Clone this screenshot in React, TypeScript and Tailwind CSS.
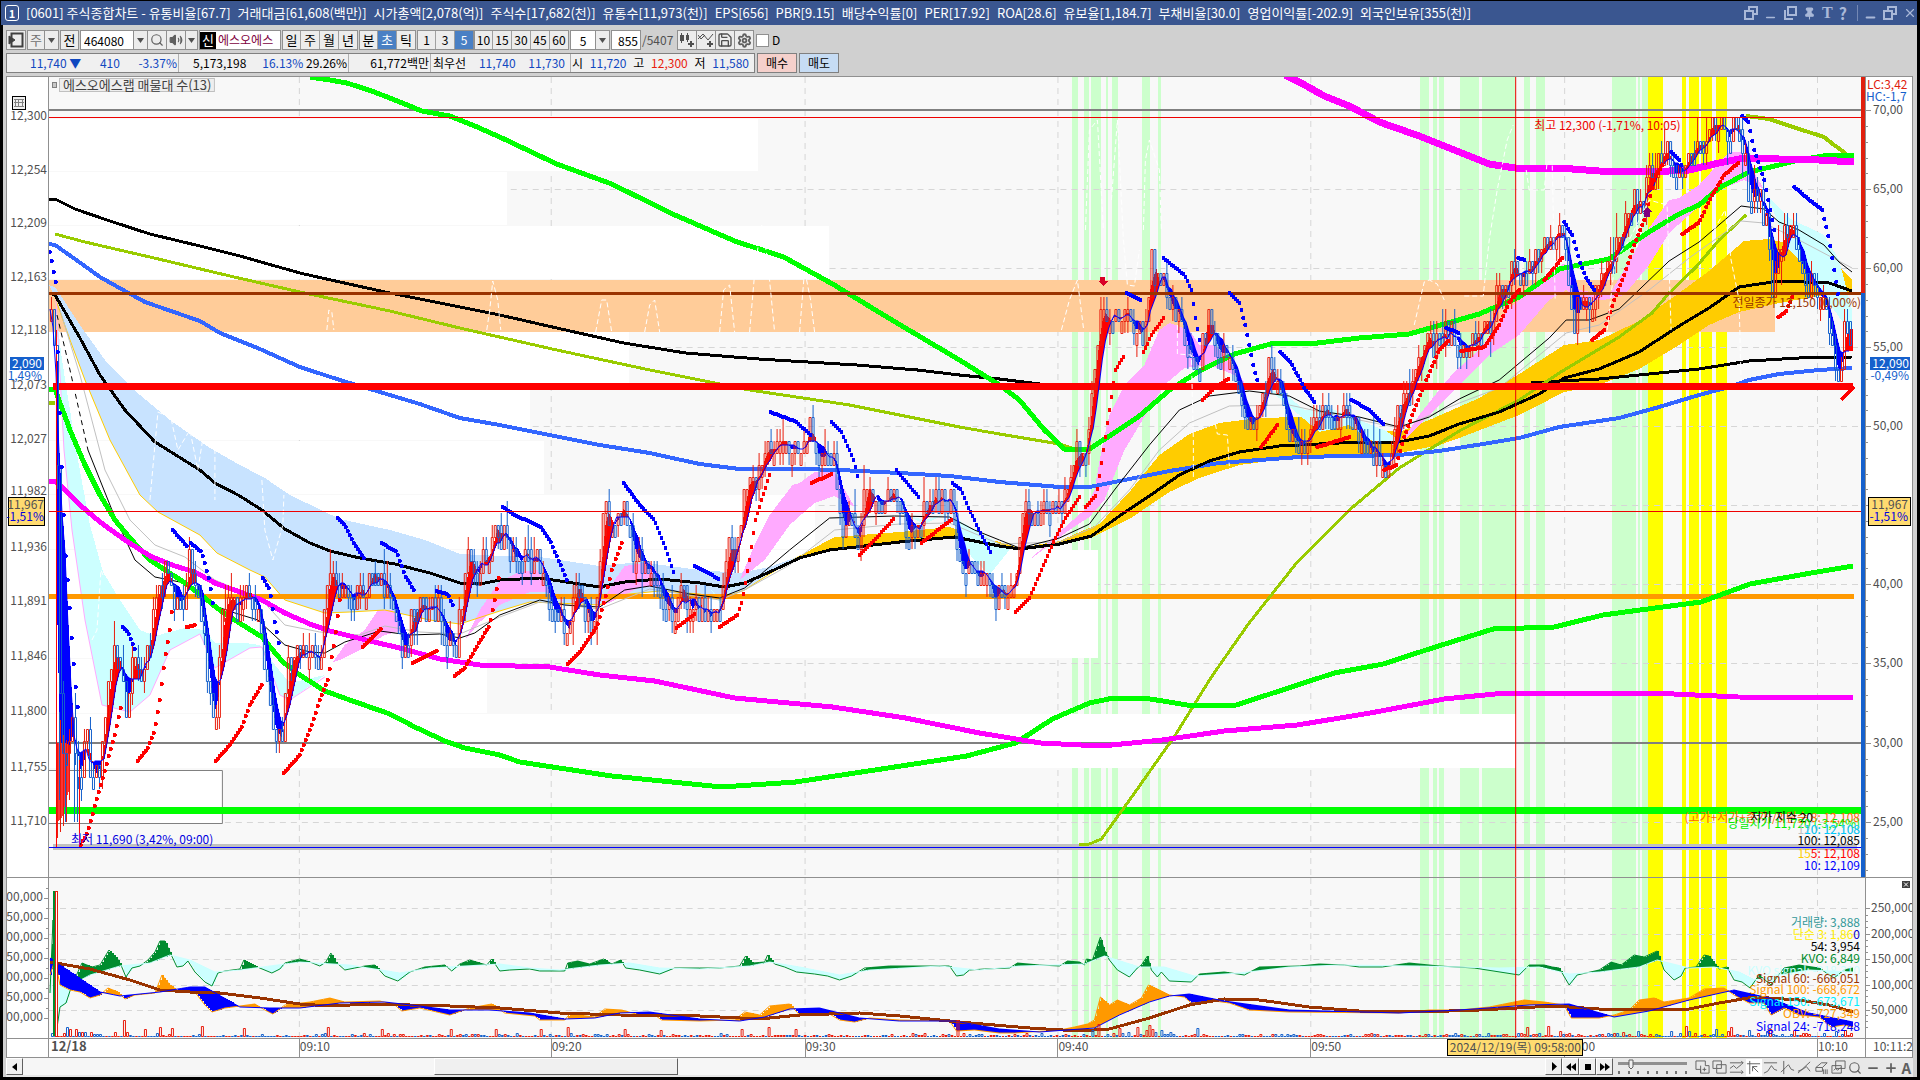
import type { ReactNode } from "react";
import {
  Search,
  Volume2,
  Save,
  Settings,
  Minus,
  Plus,
  Pin,
  X,
} from "lucide-react";

/* ---------- series data, "x,y" pairs in chart units ---------- */

const titleParts = [
  "[0601] 주식종합차트 - 유통비율[67.7]",
  "거래대금[61,608(백만)]",
  "시가총액[2,078(억)]",
  "주식수[17,682(천)]",
  "유통수[11,973(천)]",
  "EPS[656]",
  "PBR[9.15]",
  "배당수익률[0]",
  "PER[17.92]",
  "ROA[28.6]",
  "유보율[1,184.7]",
  "부채비율[30.0]",
  "영업이익률[-202.9]",
  "외국인보유[355(천)]",
];

const price =
  "49,320 54,330 57,560 60,760 65,760 70,720 78,790 84,720 90,770 100,760 106,690 112,640 118,660 125,720 130,670 140,665 150,640 158,575 165,560 172,590 180,610 188,560 196,600 204,650 214,730 220,620 228,610 240,610 248,595 258,615 264,680 272,740 280,740 288,665 300,660 310,650 318,660 330,555 340,590 352,600 362,595 376,565 385,600 395,620 403,650 412,600 425,620 435,600 445,640 455,650 465,560 475,570 485,560 493,520 500,540 510,550 535,560 545,590 558,620 565,630 575,580 585,610 593,625 600,540 607,510 615,525 623,505 630,545 640,560 655,580 672,615 683,590 690,605 705,605 717,620 725,560 737,540 745,475 755,490 765,450 772,440 782,450 792,440 802,450 812,430 820,455 832,465 842,520 852,525 857,550 865,485 875,500 895,500 905,530 915,535 925,495 940,500 952,505 960,570 985,570 992,595 1005,590 1018,560 1022,510 1040,505 1060,500 1075,450 1085,450 1092,395 1100,300 1110,330 1118,305 1128,320 1140,335 1145,330 1150,265 1162,275 1170,305 1180,320 1190,350 1197,390 1205,320 1210,310 1218,350 1230,370 1240,400 1250,430 1262,400 1270,360 1275,370 1285,420 1300,440 1310,430 1325,410 1340,410 1350,425 1365,440 1385,465 1395,430 1402,395 1415,370 1425,345 1445,330 1455,345 1470,340 1490,320 1500,285 1515,260 1522,280 1530,260 1545,240 1560,232 1565,250 1573,320 1578,290 1590,295 1605,280 1615,240 1630,210 1645,195 1655,160 1668,160 1675,190 1685,160 1700,140 1710,125 1730,125 1742,140 1750,200 1758,205 1765,210 1772,290 1780,245 1792,220 1800,280 1820,285 1830,330 1840,375 1845,310 1853,360";

const lines: { d: string; color: string; w: number; dash?: string }[] = [
  { d: "49,199 57,200 75,209 110,221 150,234 200,246 240,256 300,273 340,282 390,293 450,305 500,315 557,328 624,343 686,353 759,359 857,365 918,370 960,375 1000,379 1040,384 1080,386", color: "#000000", w: 3 },
  { d: "1532,383 1560,381 1600,379 1650,374 1700,369 1750,361 1800,358 1853,357", color: "#000000", w: 3 },
  { d: "55,234 85,242 150,257 230,276 300,292 390,311 460,328 557,350 650,370 750,390 850,405 960,427 1000,434 1060,444 1078,450", color: "#99cc00", w: 3 },
  { d: "49,403 55,403", color: "#99cc00", w: 4 },
  { d: "1747,116 1770,119 1800,129 1825,137 1835,145 1845,152 1850,157", color: "#99cc00", w: 4 },
  { d: "1080,845 1090,844 1102,839 1133,796 1176,735 1212,677 1249,624 1298,562 1350,510 1400,468 1460,431 1520,400 1560,373 1620,337 1653,313 1670,293 1697,267 1720,240 1747,215", color: "#99cc00", w: 3 },
  { d: "49,244 55,245 75,259 100,277 125,291 145,302 200,321 220,333 260,349 300,367 340,380 370,389 420,404 460,418 500,425 550,435 600,445 650,453 700,464 740,469 800,469 840,470 900,473 950,476 1000,482 1060,487 1090,487 1120,481 1170,471 1220,463 1300,457 1400,455 1440,451 1490,443 1520,438 1560,427 1620,418 1660,407 1700,395 1730,387 1750,380 1780,374 1820,370 1853,368", color: "#3366ff", w: 4 },
  { d: "60,310 80,375 105,470 130,520 155,545 185,557 215,580 262,600 285,625 320,632 360,635 385,626 420,632 460,634 500,617 540,602 600,609 650,589 720,600 745,590 790,565 835,530 900,524 950,523 1000,544 1060,542 1095,527 1130,490 1160,450 1190,423 1230,406 1290,405 1340,416 1400,428 1460,403 1500,388 1567,333 1600,325 1650,290 1690,258 1742,221 1765,223 1800,240 1853,268", color: "#c0c0c0", w: 1 },
  { d: "57,315 70,370 88,450", color: "#000000", w: 1, dash: "5 4" },
  { d: "88,450 112,510 135,560 155,577 185,583 215,606 235,613 258,620 285,645 310,652 325,653 345,642 380,631 410,635 440,634 460,638 475,633 500,615 540,600 565,605 600,607 625,590 650,586 690,594 720,598 745,588 790,550 830,518 895,516 950,517 975,530 1000,540 1020,548 1060,538 1090,524 1115,490 1150,445 1180,410 1210,396 1250,391 1290,396 1320,411 1360,417 1400,427 1430,417 1460,399 1500,380 1550,338 1567,320 1590,320 1620,309 1670,261 1700,242 1742,206 1765,209 1780,222 1800,230 1825,245 1840,262 1853,272", color: "#000000", w: 1 },
  { d: "49,293 55,295 65,312 80,338 100,375 125,410 155,442 200,470 215,483 240,496 262,510 285,529 310,543 330,551 360,558 395,564 430,573 460,583 485,583 500,580 540,578 580,584 600,587 625,582 660,579 700,583 725,587 745,583 770,572 800,558 830,550 900,542 955,537 1000,546 1020,549 1060,544 1092,536 1120,516 1150,496 1180,475 1210,461 1240,452 1280,446 1340,443 1400,442 1430,436 1460,424 1500,412 1540,394 1565,378 1600,369 1640,352 1680,326 1710,308 1740,287 1780,281 1830,283 1853,291", color: "#000000", w: 3 },
  { d: "310,77 330,80 347,83 372,91 400,102 422,111 450,116 475,126 500,137 557,164 612,184 673,214 735,241 784,257 833,284 894,321 960,360 1000,385 1020,400 1045,430 1065,449 1090,449 1110,436 1140,416 1170,390 1200,371 1235,354 1275,343 1310,344 1360,338 1410,334 1480,314 1520,297 1560,269 1610,259 1650,232 1680,214 1700,205 1720,188 1750,172 1780,165 1800,160 1830,155 1855,156", color: "#00ff00", w: 5 },
  { d: "49,389 55,389 60,403 70,430 85,465 100,495 115,520 130,538 150,560 185,583 205,598 217,608 230,617 262,637 283,662 300,675 325,691 350,700 390,714 415,727 445,741 465,748 500,755 520,762 612,776 722,787 796,782 882,769 967,756 1016,743 1053,719 1090,703 1114,698 1151,699 1194,706 1237,705 1286,689 1335,673 1384,664 1433,648 1494,629 1555,627 1604,615 1641,610 1702,602 1751,584 1812,573 1854,566", color: "#00ff00", w: 5 },
  { d: "49,481 56,482 65,490 80,505 100,522 125,540 150,556 175,566 195,572 215,583 240,592 262,600 285,613 310,624 330,631 370,641 400,648 440,659 480,665 550,667 600,675 655,681 735,698 833,707 906,718 980,733 1041,743 1102,746 1163,740 1225,731 1298,725 1371,713 1445,699 1506,693 1653,693 1739,697 1854,698", color: "#ff00ff", w: 5 },
  { d: "1286,75 1300,82 1325,96 1350,106 1380,122 1420,136 1440,144 1460,152 1490,164 1516,168 1560,168 1600,171 1650,172 1690,170 1720,163 1745,158 1780,159 1820,160 1855,162", color: "#ff00ff", w: 7 },
];

const lightBlueBand =
  "49,285 55,287 82,328 105,360 140,395 170,420 210,448 240,465 265,478 290,495 340,519 390,530 425,540 460,554 500,556 540,557 600,566 640,562 700,570 740,573 770,567 800,556 770,574 745,590 720,599 700,594 660,591 620,595 600,605 580,604 530,602 500,611 460,624 430,620 385,610 350,612 325,613 285,600 265,577 250,570 217,553 200,535 158,512 140,495 122,462 110,440 85,380 70,340 56,300";
const goldLine =
  "56,300 70,340 85,380 110,440 122,462 140,495 158,512 200,535 217,553 250,570 265,577 285,600 325,613 350,612 385,610 430,620 460,624 500,611 530,602 580,604 600,605 620,595 660,591 700,594 720,599 745,590 770,574 800,556";
const goldBand =
  "790,562 800,556 820,545 835,537 900,532 950,527 965,532 1000,542 1020,548 1060,541 1085,530 1100,524 1130,492 1160,455 1190,434 1220,423 1260,418 1300,417 1330,422 1380,430 1400,432 1430,420 1480,398 1520,374 1565,345 1600,340 1640,321 1680,293 1710,271 1745,241 1770,239 1800,246 1830,258 1853,279 1853,291 1820,296 1780,303 1740,312 1710,325 1680,345 1640,369 1600,385 1565,392 1520,415 1460,438 1440,445 1400,453 1350,455 1300,457 1240,465 1200,478 1170,492 1130,519 1092,538 1060,545 1020,549 1000,546 955,538 900,543 830,551";

const pinkAreas = [
  "333,662 345,645 365,630 378,610 393,610 405,630 385,635 360,650 340,660",
  "465,640 480,610 500,581 520,572 538,570 545,585 565,602 545,592 530,592 500,605 480,622",
  "600,607 615,580 625,566 650,562 660,575 665,587 640,587 620,598",
  "740,580 755,545 770,515 793,485 800,483 815,472 835,472 855,507 835,496 815,503 790,525 765,560",
  "1030,560 1060,532 1085,510 1095,490 1103,445 1110,415 1125,385 1145,365 1160,330 1170,323 1190,330 1200,345 1215,345 1230,360 1250,390 1235,375 1210,365 1185,368 1165,385 1145,417 1125,450 1105,500 1090,517 1070,530",
  "1400,445 1420,415 1440,390 1455,372 1480,350 1510,308 1540,285 1565,263 1580,290 1610,295 1625,270 1645,235 1670,200 1680,198 1700,185 1730,152 1742,152 1765,189 1745,180 1720,190 1690,215 1670,233 1650,265 1625,295 1605,300 1580,300 1567,290 1550,300 1520,335 1490,355 1460,385 1430,415",
];
const cyanAreas = [
  "56,310 62,360 78,460 90,525 103,572 120,600 140,630 155,636 185,628 205,630 215,643 245,643 260,645 275,665 290,683 325,675 290,700 280,695 262,647 250,648 215,668 200,634 170,650 150,695 130,712 102,705 85,620 72,530 64,450",
  "905,515 925,520 945,514 925,524",
  "955,518 985,535 1010,550 990,575 975,560 962,545",
  "1270,390 1285,393 1305,410 1330,408 1385,430 1400,440 1395,445 1370,440 1350,425 1320,432 1300,415",
  "1768,195 1790,218 1825,235 1840,260 1853,310 1853,335 1835,310 1810,270 1790,250",
  "710,588 722,600 735,585 722,606",
];

const sarBlue = [
  "50,252 52,261 54,272 56,282 58,352 60,413 62,467 64,515 66,556 69,592 71,624 73,652 75,676 77,698 79,716",
  "123,627 128,632 136,651",
  "173,530 187,546",
  "191,543 202,552 210,582 214,610",
  "263,578 270,590 275,622 280,648",
  "338,518 345,525 355,545 364,558",
  "382,543 397,552 405,575 414,590",
  "437,591 448,594 453,605",
  "503,507 515,515 540,526 550,540 560,563 567,580",
  "624,483 640,505 655,520 665,545 675,575",
  "695,566 710,573 720,580",
  "771,412 797,422 812,436",
  "832,422 842,432 850,450 855,463 859,480",
  "897,470 905,480 920,498",
  "953,483 962,490 970,510 982,535 991,552",
  "1127,293 1142,300",
  "1164,258 1175,267 1185,275 1192,290 1196,318 1200,340",
  "1230,293 1240,303 1246,325 1250,345 1255,370 1258,380",
  "1281,352 1292,363 1305,388 1316,403",
  "1352,400 1370,410 1384,424",
  "1447,328 1460,333",
  "1519,258 1525,260",
  "1565,222 1573,235 1580,260 1588,280 1595,290",
  "1672,152 1680,160 1683,167",
  "1743,116 1749,122 1755,150 1765,180 1770,205 1776,235",
  "1795,187 1810,200 1823,210 1830,240 1835,270 1840,300",
];
const sarRed = [
  "81,845 88,832 98,795 108,760 115,735 121,708",
  "138,761 148,748 155,730 160,700 165,660 170,630 172,612",
  "187,627 195,625",
  "216,761 230,745 243,725 250,705 262,685",
  "284,773 300,755 312,725 320,700 328,680 335,640 340,600",
  "363,647 382,628",
  "413,663 437,651",
  "455,676 465,668 478,645 490,625 495,600 500,572",
  "568,664 580,652 597,627 605,600 612,570 622,543",
  "677,628 695,614",
  "720,627 738,615 743,600 750,560 756,520 762,500 770,475",
  "812,483 832,474",
  "860,555 875,540 895,518",
  "922,543 945,525 952,520",
  "1016,612 1030,598 1048,556 1055,540 1066,518 1080,497",
  "1086,507 1097,495 1104,450 1110,410 1116,370 1125,355",
  "1144,352 1152,335 1164,318",
  "1203,400 1215,388 1230,378",
  "1262,447 1278,425",
  "1318,447 1350,437",
  "1385,470 1397,465 1404,440 1415,410 1425,385 1440,350 1450,340",
  "1462,351 1485,347 1500,325 1510,302 1520,290",
  "1545,280 1563,258",
  "1593,340 1605,330 1615,300 1625,275 1635,245 1645,220 1655,180 1663,165",
  "1683,234 1700,222 1712,197 1725,175 1740,162",
  "1779,317 1787,311 1793,297",
];

const whiteDashes = [
  "150,500 158,412 171,418 178,450 190,430 198,470 205,425 215,440 215,500",
  "262,480 265,530 273,560 283,525 284,495",
  "92,640 97,630 101,570 103,575",
  "327,330 329,310 332,312 334,330",
  "487,330 490,310 493,281 498,300 501,330",
  "596,332 602,300 607,300 612,332",
  "645,332 650,305 655,300 660,332",
  "720,332 724,290 730,285 735,332",
  "750,332 756,262 762,225 768,260 775,332",
  "800,332 805,270 811,300 815,332",
  "1062,330 1070,300 1078,280 1084,328",
  "1086,230 1090,130 1098,120 1104,230",
  "1112,200 1118,120 1124,240 1128,285 1135,286 1140,250",
  "1144,230 1146,160 1150,140 1160,170 1162,230",
  "1178,325 1178,354 1192,355 1194,440 1194,478",
  "1216,424 1218,434 1228,435 1230,466",
  "1415,325 1425,282 1430,280 1438,284 1445,300",
  "1465,296 1484,296 1490,240 1498,190 1508,140 1514,125",
  "1527,170 1530,190 1545,190 1548,162 1553,162 1556,300",
  "1608,330 1616,260 1630,240 1650,200 1668,205 1672,330",
  "1715,230 1726,210 1732,260 1740,300 1742,380",
];

const kvo =
  "50,993 53,920 56,1035 60,1007 66,1003 72,985 82,963 92,967 100,965 109,950 117,958 121,965 126,977 132,968 140,966 148,960 155,952 160,941 165,941 170,952 177,967 183,966 188,961 195,972 205,982 212,986 218,973 225,971 240,969 244,960 255,966 272,973 280,969 285,963 300,959 310,962 320,966 326,962 331,953 336,962 345,970 355,968 365,966 375,965 385,976 398,981 410,972 425,967 445,965 452,971 460,964 470,960 480,963 487,965 492,959 500,971 510,970 530,969 540,971 565,971 568,963 578,961 590,964 604,959 612,964 621,960 626,968 640,970 660,974 675,968 700,968 720,968 740,966 746,956 753,963 765,962 768,955 775,964 785,967 797,972 815,974 828,976 840,980 852,976 865,968 890,966 950,966 957,976 964,975 970,970 985,969 1010,968 1018,963 1040,965 1060,966 1068,961 1080,962 1085,965 1087,959 1093,960 1101,937 1105,950 1110,960 1118,970 1130,977 1138,968 1142,965 1148,956 1152,970 1158,977 1162,972 1170,981 1192,982 1200,974 1225,972 1245,975 1260,967 1300,966 1320,964 1345,965 1360,967 1383,967 1410,963 1440,966 1475,968 1520,975 1530,965 1545,965 1553,967 1560,968 1570,985 1578,975 1600,970 1612,962 1622,965 1635,955 1645,957 1658,951 1665,970 1675,980 1682,976 1686,968 1697,967 1705,955 1710,956 1720,969 1728,967 1735,980 1743,982 1751,988 1760,975 1772,985 1785,968 1800,965 1820,968 1835,978 1845,970 1854,968";
const kvoSignal =
  "50,960 60,985 75,983 90,975 120,966 150,963 170,955 190,960 215,972 240,970 300,962 350,965 400,973 430,968 500,964 530,968 560,970 600,965 630,963 660,968 700,969 750,966 770,962 800,967 840,975 870,970 940,966 980,970 1020,966 1085,964 1105,956 1140,967 1165,967 1195,976 1240,973 1290,967 1340,965 1420,966 1500,968 1540,967 1570,974 1600,972 1640,967 1658,960 1690,968 1715,967 1740,972 1755,980 1780,975 1810,970 1854,972";
const obv =
  "50,975 55,960 60,985 70,990 80,992 90,998 100,995 108,988 118,992 125,999 135,995 155,993 162,975 170,985 180,992 195,992 205,1005 212,1012 225,1008 240,1006 255,1004 265,1010 273,1014 285,1005 310,1002 330,998 345,1002 380,1001 395,1005 402,1011 420,1008 450,1015 470,1008 492,1004 505,1013 535,1016 540,1020 565,1020 570,1014 595,1017 605,1009 622,1010 640,1015 655,1015 662,1020 700,1021 735,1020 745,1012 760,1015 770,1006 790,1004 800,1015 830,1014 840,1020 855,1022 870,1018 900,1020 950,1021 957,1031 975,1030 1000,1033 1015,1033 1060,1030 1075,1027 1088,1024 1095,1020 1101,997 1110,1005 1118,1000 1130,1005 1142,998 1149,985 1160,990 1170,995 1185,997 1192,1003 1215,1001 1230,1003 1250,1010 1290,1012 1400,1013 1430,1010 1460,1010 1490,1007 1525,1000 1545,1002 1565,1005 1572,1018 1600,1018 1615,1015 1630,1010 1640,1000 1655,998 1665,1002 1690,998 1705,989 1725,988 1735,995 1750,1003 1765,1003 1772,1015 1785,1008 1800,1015 1820,1017 1832,1027 1845,1025 1854,1027";
const signal24 =
  "50,958 60,965 100,992 120,996 160,992 190,987 205,987 240,1007 270,1008 300,1008 340,1003 385,1002 420,1006 450,1010 490,1010 530,1013 565,1019 595,1018 620,1013 650,1012 700,1019 740,1021 765,1017 790,1009 820,1008 860,1018 900,1021 955,1021 1000,1029 1040,1032 1095,1028 1120,1015 1150,1002 1170,996 1190,994 1225,1001 1290,1010 1400,1013 1460,1010 1530,1005 1570,1004 1615,1017 1650,1011 1690,1000 1735,990 1770,998 1810,1013 1854,1022";
const signal60 =
  "50,962 90,969 130,980 160,990 190,992 220,993 260,998 300,1004 330,1006 370,1004 450,1006 500,1008 560,1013 620,1015 700,1016 760,1019 800,1015 860,1013 900,1016 960,1022 1030,1028 1080,1031 1110,1029 1150,1018 1190,1005 1225,999 1260,1000 1310,1007 1360,1011 1420,1012 1480,1010 1555,1006 1600,1009 1690,1009 1720,1003 1755,997 1800,1000 1830,1005 1854,1012";

// right edge, top and bottom of each volume-at-price bar
const profile = [
  [758, 119, 171],
  [507, 172, 225],
  [829, 226, 279],
  [629, 332, 386],
  [530, 386, 440],
  [544, 441, 494],
  [815, 495, 549],
  [1099, 550, 604],
  [1099, 604, 658],
  [487, 659, 713],
  [1517, 714, 768],
];
const greenBands = [
  [1073, 6], [1085, 5], [1092, 10], [1107, 2], [1113, 6], [1143, 8], [1159, 3],
  [1421, 9], [1434, 4], [1440, 5], [1461, 19], [1483, 34], [1525, 6], [1537, 9],
  [1613, 24], [1639, 2], [1643, 6],
];
const yellowBands = [[1649, 15], [1683, 4], [1690, 10], [1702, 11], [1717, 11]];
const gridX = [299, 551, 805, 1058, 1311, 1565, 1818];
const volumeSpikes: Record<number, number> = {
  124: 16, 160: 9, 172: 8, 202: 10, 243: 8, 328: 9, 381: 7, 451: 7, 497: 7, 540: 7, 567: 9,
  624: 7, 660: 6, 741: 7, 768: 9, 795: 7, 957: 16, 1098: 12, 1137: 9, 1151: 11, 1527: 9, 1548: 10,
  1686: 10, 1733: 9, 1770: 7,
};

/* ---------- helpers ---------- */

type Pt = [number, number];

const parse = (s: string): Pt[] =>
  s.split(" ").map((p) => p.split(",").map(Number) as Pt);

function at(pts: Pt[], x: number) {
  if (x <= pts[0][0]) return pts[0][1];
  for (let i = 1; i < pts.length; i++) {
    if (x <= pts[i][0]) {
      const [x0, y0] = pts[i - 1];
      const [x1, y1] = pts[i];
      return y0 + ((y1 - y0) * (x - x0)) / (x1 - x0);
    }
  }
  return pts[pts.length - 1][1];
}

const rnd = (n: number) => {
  const v = Math.sin(n * 12.9898) * 43758.5453;
  return v - Math.floor(v);
};

// splits the area between two series into the parts where a is over or under b
function between(a: Pt[], b: Pt[], step = 2) {
  let over = "";
  let under = "";
  for (let x = 50; x < 1854; x += step) {
    const ya = Math.round(at(a, x));
    const yb = Math.round(at(b, x));
    if (ya === yb) continue;
    const cell = `M${x} ${ya}h${step}V${yb}h${-step}z`;
    if (ya < yb) over += cell;
    else under += cell;
  }
  return { over, under };
}

// one round dot per bar
function dots(series: string[]) {
  let d = "";
  for (const s of series) {
    const pts = parse(s);
    for (let x = pts[0][0]; x <= pts[pts.length - 1][0]; x += 2) {
      d += `M${x} ${Math.round(at(pts, x))}h0`;
    }
  }
  return d;
}

const TICK = 12;

function buildCandles() {
  const pts = parse(price);
  let up = "";
  let down = "";
  const closes: Pt[] = [];
  let prev = 320;
  let i = 0;
  for (let x = 50; x < 1853; x += 3, i++) {
    const raw = at(pts, x) + (rnd(i) - 0.5) * 30;
    const close = Math.max(117, 117 + Math.round((raw - 117) / TICK) * TICK);
    const top = Math.min(prev, close);
    const bottom = Math.max(prev, close, top + TICK);
    const high = Math.max(117, top - (rnd(i + 500) > 0.6 ? TICK : 0) - (rnd(i + 650) > 0.85 ? TICK : 0));
    const low = bottom + (rnd(i + 900) > 0.65 ? TICK : 0) + (rnd(i + 990) > 0.92 ? TICK : 0);
    const d = `M${x}.5 ${top}.5h2V${bottom}.5h-2zM${x + 1}.5 ${high}V${top}M${x + 1}.5 ${bottom}V${low}`;
    const rising = close === prev ? rnd(i + 77) > 0.5 : close < prev;
    if (rising) up += d;
    else down += d;
    closes.push([x, close]);
    prev = close;
  }
  const average = (n: number): Pt[] =>
    closes.map(([x], k) => {
      const part = closes.slice(Math.max(0, k - n + 1), k + 1);
      return [x, part.reduce((t, c) => t + c[1], 0) / part.length] as Pt;
    });
  return { up, down, fast: average(3), slow: average(6) };
}

function buildVolume() {
  let up = "";
  let down = "";
  let i = 0;
  for (let x = 51; x < 1853; x += 3, i++) {
    const busy = x < 220 ? 5 : x > 1500 ? 4 : x > 1090 && x < 1200 ? 5 : 2;
    const spike = volumeSpikes[x] ?? volumeSpikes[x + 1] ?? volumeSpikes[x + 2] ?? 0;
    const h = Math.max(spike, Math.floor(rnd(i + 31) * rnd(i + 5) * busy * 2));
    const d = `M${x}.5 1036.5v${-h}h2v${h}z`;
    if (rnd(i + 210) > 0.5 || spike) up += d;
    else down += d;
  }
  return { up, down };
}

const candles = buildCandles();
const maBand = between(candles.fast, candles.slow, 1);
const volume = buildVolume();
const kvoBand = between(parse(kvo), parse(kvoSignal));
const obvBand = between(parse(obv), parse(signal24));
const blueDots = dots(sarBlue);
const redDots = dots(sarRed);
const points = (pts: Pt[]) => pts.map((p) => p.join(",")).join(" ");

const uiFont = "font-['Noto_Sans_CJK_KR',sans-serif] text-[12px]";

/* ---------- chart panels ---------- */

function Bands({ y, h }: { y: number; h: number }) {
  return (
    <>
      {greenBands.map(([x, w]) => (
        <rect key={x} x={x} y={y} width={w} height={h} fill="#ccffcc" />
      ))}
      {yellowBands.map(([x, w]) => (
        <rect key={x} x={x} y={y} width={w} height={h} fill="#ffff00" />
      ))}
    </>
  );
}

function Label({ x = 1861, y, fill, end = true, children }: { x?: number; y: number; fill: string; end?: boolean; children: ReactNode }) {
  return (
    <text x={x} y={y} fill={fill} textAnchor={end ? "end" : "start"}>
      {children}
    </text>
  );
}

function PricePanel() {
  return (
    <svg viewBox="49 77 1817 800" preserveAspectRatio="none" className={`block h-full w-full bg-[#f8f8f8] ${uiFont}`}>
      <g shapeRendering="crispEdges" fill="none">
        <Bands y={77} h={800} />
        <g stroke="#d6d6d6" strokeDasharray="6 5">
          {gridX.map((x) => (
            <path key={x} d={`M${x}.5 77V877`} />
          ))}
          {[189, 268, 347, 426, 505, 584, 663, 822].map((y) => (
            <path key={y} d={`M49 ${y}.5H1862`} />
          ))}
        </g>
        {profile.map(([x, y0, y1]) => (
          <rect key={y0} x={49} y={y0} width={x - 49} height={y1 - y0} fill="#ffffff" />
        ))}
        <rect x={49} y={280} width={1727} height={52} fill="#ffcc99" />
        <path d="M49 770.5H222.5V823.5H49" fill="#ffffff" stroke="#808080" />

        <polygon points={lightBlueBand} fill="#c8e3ff" />
        <polygon points={goldBand} fill="#ffcc00" />
        {cyanAreas.map((p) => (
          <polygon key={p} points={p} fill="#ccffff" />
        ))}
        {pinkAreas.map((p) => (
          <polygon key={p} points={p} fill="#ffaaff" />
        ))}
        <polyline points={goldLine} stroke="#ffcc00" />
        <polyline points="56,300 64,450 72,530 85,620 102,705 130,712 150,695 170,650 200,634 215,668 250,648 262,647 280,695 290,700 325,677" stroke="#ffaaff" />

        <path d="M49 110H1862" stroke="#808080" strokeWidth={2} />
        <path d="M49 743H1862" stroke="#808080" strokeWidth={2} />
        <path d="M49 596.5H1855" stroke="#ff9900" strokeWidth={5} />
        <path d="M49 810.5H1862" stroke="#00ff00" strokeWidth={7} />
        <path d="M53 847H1858" stroke="#c0c0c0" strokeWidth={6} />
        <path d="M49 847.5H1862" stroke="#0000ff" />

        {lines.map((l) => (
          <polyline key={l.d} points={l.d} stroke={l.color} strokeWidth={l.w} strokeDasharray={l.dash} strokeLinejoin="round" />
        ))}
        <path d="M53 386.5H1854" stroke="#ff0000" strokeWidth={7} />
        <path d="M1842 400L1855 387" stroke="#ff0000" strokeWidth={4} />

        {/* opening gap */}
        <path d="M57 330L59 450L63 600L70 743H60L57 600z" fill="#0000ff" />
        <path d="M57 743H70V788L66 800L62 818L58 822z" fill="#ff3333" />
        <path d="M57.5 743V838M60.5 720V832M63.5 735V826M66.5 740V822M69.5 720V800" stroke="#e81c0c" />
        <path d="M59.5 712V800M65.5 758V822M74.5 740V822M77.5 750V822" stroke="#1560cc" />

        <path d={maBand.over} fill="#ff0000" />
        <path d={maBand.under} fill="#0000ff" />
        <path d={candles.up} stroke="#e81c0c" />
        <path d={candles.down} stroke="#1560cc" />
        <polyline points={points(candles.slow)} stroke="#0000ff" />
        <path d="M56.5 330V847M79.5 760V847" stroke="#ff0000" />

        <path d="M49 293.5H1862" stroke="#993300" strokeWidth={3} />
        <path d={blueDots} stroke="#0000ff" strokeWidth={4} strokeLinecap="round" />
        <path d={redDots} stroke="#ff0000" strokeWidth={4} strokeLinecap="round" />
        <g stroke="#ffffff" strokeDasharray="5 3">
          {whiteDashes.map((p) => (
            <polyline key={p} points={p} />
          ))}
        </g>
        <path d="M49 117.5H1862M49 511.5H1862M1516.5 77V877" stroke="#ee0000" />
        <path d="M1101 277h5v4h3l-5 5l-5-5h2z" fill="#d90026" />
        <path d="M1648 207l5 5h-2v5h-6v-5h-2z" fill="#800080" />
        <rect x={1862} y={77} width={4} height={216} fill="#e0200e" />
        <rect x={1862} y={293} width={4} height={584} fill="#1560cc" />
        <rect x={52.5} y={82.5} width={4} height={5} fill="#c8c8c8" stroke="#808080" />
        <rect x={59.5} y={78.5} width={155} height={13} fill="#eeeeee" stroke="#c0c0c0" />
      </g>
      <g className="text-[13px]">
        <Label x={63} y={90} fill="#404040" end={false}>에스오에스랩 매물대 수(13)</Label>
      </g>
      <Label x={1535} y={130} fill="#ee0000" end={false}>최고 12,300 (-1,71%, 10:05)</Label>
      <Label x={71} y={844} fill="#0000dd" end={false}>최저 11,690 (3,42%, 09:00)</Label>
      <Label x={1862} y={307} fill="#993300">전일종가 12,150 (0,00%)</Label>
      <Label y={822} fill="#ff6600">(고가+저가+종가)/3 단순 8: 12,108</Label>
      <Label x={1814} y={822} fill="#000000">저가 지수 20</Label>
      <Label y={828} fill="#00ee00">당일시가 11,720 (-3,54%)</Label>
      <Label y={834} fill="#c0c0c0">120: 12,108</Label>
      <Label y={834} fill="#00ccff">10: 12,108</Label>
      <Label y={845} fill="#000000">100: 12,085</Label>
      <Label x={1812} y={858} fill="#ffcc00">15</Label>
      <Label y={858} fill="#ff0000">5: 12,108</Label>
      <Label y={870} fill="#0000ff">10: 12,109</Label>
    </svg>
  );
}

function IndicatorPanel() {
  return (
    <svg viewBox="49 878 1817 160" preserveAspectRatio="none" className={`block h-full w-full bg-[#f8f8f8] ${uiFont}`}>
      <g shapeRendering="crispEdges" fill="none">
        <Bands y={878} h={160} />
        <g stroke="#d6d6d6" strokeDasharray="6 5">
          {gridX.map((x) => (
            <path key={x} d={`M${x}.5 878V1038`} />
          ))}
          {[908, 934, 959, 985, 1010].map((y) => (
            <path key={y} d={`M49 ${y}.5H1862`} />
          ))}
        </g>
        <path d={kvoBand.over} fill="#008c2e" />
        <path d={kvoBand.under} fill="#ccffff" />
        <polyline points={kvo} stroke="#008c2e" />
        <polyline points={kvoSignal} stroke="#ccffff" />
        <path d={obvBand.over} fill="#ff9900" />
        <path d={obvBand.under} fill="#0000ff" />
        <polyline points={obv} stroke="#ff9900" />
        <polyline points={signal60} stroke="#993300" strokeWidth={3} />
        <polyline points={signal24} stroke="#0000ff" />
        <path d={volume.down} stroke="#1560cc" />
        <path d={volume.up} stroke="#e81c0c" />
        <rect x={53} y={891} width={2} height={145} fill="#008c2e" />
        <rect x={55.5} y={891.5} width={2} height={145} fill="#ffffff" stroke="#e81c0c" />
        <path d="M1516.5 878V1038" stroke="#ee0000" />
      </g>
      <Label y={927} fill="#339999">거래량: 3,888</Label>
      <Label y={939} fill="#ffee00">단순 3: 1,860</Label>
      <Label y={939} fill="#0000ff">0</Label>
      <Label y={951} fill="#000000">54: 3,954</Label>
      <Label y={963} fill="#008c2e">KVO: 6,849</Label>
      <Label y={975} fill="#ccffff">KVO signal: -218,310</Label>
      <Label y={983} fill="#993300">Signal 60: -666,051</Label>
      <Label y={994} fill="#ff9900">Signal 100: -668,672</Label>
      <Label y={1006} fill="#00eeff">Signal 150: -673,671</Label>
      <Label y={1018} fill="#ff9900">OBV: -727,349</Label>
      <Label y={1031} fill="#0000ff">Signal 24: -718,248</Label>
    </svg>
  );
}

const leftPrices: [string, number][] = [
  ["12,300", 116], ["12,254", 170], ["12,209", 223], ["12,163", 277], ["12,118", 330],
  ["12,073", 385], ["12,027", 439], ["11,982", 491], ["11,936", 547], ["11,891", 601],
  ["11,846", 656], ["11,800", 711], ["11,755", 767], ["11,710", 821],
];
const rightScale: [string, number][] = [
  ["70,00", 110], ["65,00", 189], ["60,00", 268], ["55,00", 347], ["50,00", 426],
  ["45,00", 505], ["40,00", 584], ["35,00", 663], ["30,00", 743], ["25,00", 822],
];

function LeftAxis() {
  return (
    <div className="flex w-[42px] shrink-0 flex-col border-r border-[#909090] bg-white">
      <div className="min-h-0 flex-[800]">
        <svg viewBox="7 77 41 800" preserveAspectRatio="none" className={`block h-full w-full ${uiFont}`}>
          <g transform="translate(12 96)">
            <rect x={0} y={0} width={14} height={14} fill="#000" />
            <rect x={1} y={1} width={12} height={12} fill="#f0f0f0" />
            <path d="M2 3.500H12M2 6.500H12M2 10.500H12M3.500 3V11M6.500 3V11M10.500 3V11" stroke="#808080" />
          </g>
          {leftPrices.map(([t, y]) => (
            <Label key={t} x={47} y={y + 4} fill="#505050">{t}</Label>
          ))}
          <rect x={10} y={357} width={34} height={13} fill="#1560cc" />
          <Label x={42} y={368} fill="#ffffff">2,090</Label>
          <rect x={10} y={370} width={34} height={10} fill="#ffffff" />
          <Label x={42} y={380} fill="#1560cc">1,49%</Label>
          <rect x={8.500} y={497.500} width={36} height={28} fill="#ffdb70" stroke="#000" />
          <Label x={44} y={509} fill="#505050">11,967</Label>
          <Label x={44} y={521} fill="#0000dd">-1,51%</Label>
        </svg>
      </div>
      <div className="min-h-0 flex-[160] border-t border-[#909090]">
        <svg viewBox="7 878 41 160" preserveAspectRatio="none" className={`block h-full w-full ${uiFont}`}>
          {["00,000", "50,000", "00,000", "50,000", "00,000", "50,000", "00,000"].map((t, i) => (
            <g key={i}>
              <Label x={43} y={901 + i * 20} fill="#505050">{t}</Label>
              <path d={`M44 ${898 + i * 20}.5H48M46 ${888 + i * 20}.5H48`} stroke="#909090" />
            </g>
          ))}
        </svg>
      </div>
    </div>
  );
}

function RightAxis() {
  return (
    <div className="flex w-[47px] shrink-0 flex-col border-l border-[#909090] bg-white">
      <div className="min-h-0 flex-[800]">
        <svg viewBox="1867 77 46 800" preserveAspectRatio="none" className={`block h-full w-full ${uiFont}`}>
          <Label x={1868} y={89} fill="#e0200e" end={false}>LC:3,42</Label>
          <Label x={1867} y={101} fill="#1560cc" end={false}>HC:-1,7</Label>
          {rightScale.map(([t, y]) => (
            <g key={t}>
              <Label x={1874} y={y + 4} fill="#505050" end={false}>{t}</Label>
              <path
                d={`M1867 ${y}.5h5M1867 ${y + 16}.5h2M1867 ${y + 32}.5h2M1867 ${y + 48}.5h2M1867 ${y + 63}.5h2`}
                stroke="#909090"
              />
            </g>
          ))}
          <rect x={1871} y={357} width={40} height={13} fill="#1560cc" />
          <Label x={1910} y={368} fill="#ffffff">12,090</Label>
          <Label x={1910} y={380} fill="#1560cc">-0,49%</Label>
          <rect x={1869.500} y={497.500} width={42} height={28} fill="#ffdb70" stroke="#000" />
          <Label x={1909} y={509} fill="#505050">11,967</Label>
          <Label x={1909} y={521} fill="#0000dd">-1,51%</Label>
        </svg>
      </div>
      <div className="min-h-0 flex-[160] border-t border-[#909090]">
        <svg viewBox="1867 878 46 160" preserveAspectRatio="none" className={`block h-full w-full ${uiFont}`}>
          <rect x={1903} y={881} width={8} height={7} fill="#404040" />
          <path d="M1905 882.500l4 4M1909 882.500l-4 4" stroke="#fff" />
          {["250,000", "200,000", "150,000", "100,000", "50,000"].map((t, i) => (
            <g key={t}>
              <Label x={1872} y={912 + Math.round(i * 25.500)} fill="#505050" end={false}>{t}</Label>
              <path
                d={`M1867 ${908 + Math.round(i * 25.500)}.5h4M1867 ${915 + i * 25}.5h2M1867 ${921 + i * 25}.5h2M1867 ${927 + i * 25}.5h2`}
                stroke="#909090"
              />
            </g>
          ))}
        </svg>
      </div>
    </div>
  );
}

/* ---------- window chrome ---------- */

function Windows({ flip = false }: { flip?: boolean }) {
  return (
    <svg width="14" height="14" viewBox="0 0 14 14" fill="none" stroke="currentColor" strokeWidth="2" className={flip ? "-scale-x-100" : ""}>
      <path d="M5 5V1h8v7H9M1 5h8v8H1z" />
    </svg>
  );
}

function TitleBar() {
  return (
    <header className="flex h-[24px] shrink-0 items-center justify-between bg-[#3a5690] pl-1 text-white">
      <h1 className="flex items-center gap-[7px] text-[13px] leading-[18px] whitespace-nowrap">
        <span className="flex h-[16px] w-[14px] items-center justify-center rounded-[3px] border border-white text-[11px] font-bold">1</span>
        {titleParts.map((t) => (
          <span key={t}>{t}</span>
        ))}
      </h1>
      <div className="flex items-center gap-[6px] text-[#a9b8d8]">
        <button aria-label="창 분리"><Windows /></button>
        <button aria-label="접기"><Minus size={13} strokeWidth={3} className="mt-2" /></button>
        <button aria-label="창 복제">
          <svg width="14" height="14" viewBox="0 0 14 14" fill="none" stroke="currentColor" strokeWidth="2">
            <path d="M5 1h8v8H5zM2 4v9h8" />
          </svg>
        </button>
        <button aria-label="고정"><Pin size={13} fill="currentColor" /></button>
        <button className="font-['Liberation_Serif',serif] text-base leading-4 font-bold">T</button>
        <button className="text-base leading-4 font-bold">?</button>
        <span className="ml-1 h-[16px] w-px bg-[#7488b4]" />
        <button aria-label="최소화"><Minus size={13} strokeWidth={4} className="mt-2" /></button>
        <button aria-label="이전 크기"><Windows /></button>
        <button aria-label="닫기"><X size={14} strokeWidth={2} /></button>
      </div>
    </header>
  );
}

const cell = "flex h-[20px] items-center justify-center border border-[#909090] bg-[#ececec]";

function Arrow() {
  return (
    <svg width="7" height="5" viewBox="0 0 7 5">
      <path d="M0 0H7L3.500 5z" fill="#505050" />
    </svg>
  );
}

function Group({ items, active }: { items: string[]; active?: string }) {
  return (
    <div className="flex h-[20px] border border-[#909090] bg-[#ececec]">
      {items.map((t) => (
        <button
          key={t}
          className={`w-[19px] border-r border-[#a0a0a0] first:w-[18px] last:w-[18px] last:border-r-0 ${t === active ? "bg-[#4a80c4] text-white" : ""}`}
        >
          {t}
        </button>
      ))}
    </div>
  );
}

function Toolbar() {
  return (
    <div className="flex h-[20px] items-center gap-px leading-[18px]">
      <button aria-label="메뉴" className={`${cell} w-[20px]`}>
        <svg width="16" height="16" viewBox="0 0 16 16" fill="none" stroke="#404040">
          <path d="M3.500 1.500H14.500V14.500H3.500z" strokeWidth="2" />
          <path d="M1 4l6 4l-6 4z" fill="#404040" />
        </svg>
      </button>
      <div className="flex">
        <button className={`${cell} w-[18px] text-[13px] text-[#707070]`}>주</button>
        <button aria-label="주기 선택" className={`${cell} w-[14px] border-l-0`}><Arrow /></button>
      </div>
      <button className={`${cell} w-[19px] text-[13px]`}>전</button>
      <div className="flex">
        <input aria-label="종목코드" defaultValue="464080" className="h-[20px] w-[54px] border border-[#909090] bg-white px-[3px]" />
        <button aria-label="종목 목록" className={`${cell} w-[14px] border-l-0`}><Arrow /></button>
        <button aria-label="검색" className={`${cell} w-[19px] border-l-0`}><Search size={14} color="#606060" /></button>
        <button aria-label="소리" className={`${cell} w-[19px] border-l-0`}><Volume2 size={14} fill="#606060" color="#606060" /></button>
        <button aria-label="소리 설정" className={`${cell} w-[12px] border-l-0`}><Arrow /></button>
      </div>
      <div className="flex h-[20px] w-[82px] items-center gap-[2px] border border-[#909090] bg-white text-[13px] whitespace-nowrap text-[#800040]">
        <span className="flex h-[17px] w-[16px] shrink-0 items-center justify-center bg-black text-white">신</span>
        <span className="text-[12px]">에스오에스</span>
      </div>
      <div className="flex gap-px text-[13px]">
        <Group items={["일", "주", "월", "년"]} />
        <Group items={["분", "초", "틱"]} active="초" />
      </div>
      <div className="flex">
        <Group items={["1", "3", "5"]} active="5" />
        <Group items={["10", "15", "30", "45", "60"]} />
      </div>
      <div className="flex">
        <input aria-label="간격" defaultValue="5" className="h-[20px] w-[26px] border border-[#909090] bg-white text-center" />
        <button aria-label="간격 선택" className={`${cell} w-[14px] border-l-0`}><Arrow /></button>
      </div>
      <input aria-label="표시 개수" defaultValue="855" className="h-[20px] w-[30px] border border-[#909090] bg-white pr-[2px] text-right" />
      <span className="w-[34px] text-[#505050]">/5407</span>
      <div className="flex">
        <button aria-label="봉 추가" className={`${cell} w-[20px]`}>
          <svg width="16" height="16" viewBox="0 0 16 16" fill="#505050">
            <path d="M1 3h1V1h1v2h2v6H3v2H2V9H1zM7 3h1V1h1v2h1v5H9v2H8V8H7z" />
            <path d="M11 9h2v2h2v2h-2v2h-2v-2H9v-2h2z" />
          </svg>
        </button>
        <button aria-label="지표 추가" className={`${cell} w-[19px] border-l-0`}>
          <svg width="16" height="16" viewBox="0 0 16 16" fill="none" stroke="#505050">
            <path d="M0 7l5-5l5 6l5-6M0 3l3 4l4-4" />
            <path d="M11 9h2v2h2v2h-2v2h-2v-2H9v-2h2z" fill="#505050" stroke="none" />
          </svg>
        </button>
        <button aria-label="저장" className={`${cell} w-[19px] border-l-0`}><Save size={16} color="#505050" /></button>
        <button aria-label="설정" className={`${cell} w-[19px] border-l-0`}><Settings size={15} color="#606060" strokeWidth={3} /></button>
      </div>
      <label className="flex items-center gap-[3px] pl-px">
        <input type="checkbox" className="h-[13px] w-[13px] appearance-none border border-[#909090] bg-white" />
        D
      </label>
    </div>
  );
}

const num = "text-[#1048c0]";

function Quote() {
  return (
    <div className="flex h-[20px] items-center gap-[2px] leading-[18px] whitespace-nowrap">
      <div className="flex h-[20px] w-[749px] items-stretch border border-[#808080] bg-[#f0f0f0]">
        <div className={`flex w-[172px] justify-between border-r border-[#b0b0b0] pr-[1px] pl-[23px] ${num}`}>
          <span>11,740 ▼</span>
          <span>410</span>
          <span>-3.37%</span>
        </div>
        <div className="flex w-[170px] justify-between border-r border-[#b0b0b0] pr-[1px] pl-[14px]">
          <span>5,173,198</span>
          <span><span className={num}>16.13%</span> 29.26%</span>
        </div>
        <div className="w-[82px] border-r border-[#b0b0b0] pr-[1px] text-right">61,772백만</div>
        <div className="flex w-[140px] justify-between border-r border-[#b0b0b0] pr-[5px] pl-[2px]">
          <span>최우선</span>
          <span className={num}>11,740</span>
          <span className={num}>11,730</span>
        </div>
        <div className="flex flex-1 justify-between pr-[5px] pl-[1px]">
          <span>시</span>
          <span className={num}>11,720</span>
          <span>고</span>
          <span className="text-[#e81c0c]">12,300</span>
          <span>저</span>
          <span className={num}>11,580</span>
        </div>
      </div>
      <button className="h-[20px] w-[40px] border border-[#808080] bg-[#f5d0cb]">매수</button>
      <button className="h-[20px] w-[40px] border border-[#808080] bg-[#c6dcf4]">매도</button>
    </div>
  );
}

function TimeAxis() {
  return (
    <div className="flex h-[19px] shrink-0 border-t border-[#909090] bg-white text-[#505050]">
      <div className="w-[42px] shrink-0 border-r border-[#909090]" />
      <div className="relative min-w-0 flex-1">
        <div className="grid h-full grid-cols-[250fr_252fr_254fr_253fr_253fr_254fr_253fr_48fr] leading-[14px]">
          <span className="pl-[2px] text-[13px] font-bold">12/18</span>
          {["09:10", "09:20", "09:30", "09:40", "09:50", "10:00", "10:10"].map((t) => (
            <span key={t} className="border-l border-[#909090]">{t}</span>
          ))}
        </div>
        <span className="absolute top-0 left-[77%] h-[17px] w-[136px] border border-black bg-[#ffdb70] text-center leading-[14px] whitespace-nowrap">
          2024/12/19(목) 09:58:00
        </span>
      </div>
      <div className="w-[47px] shrink-0 border-l border-[#909090] pl-[7px] leading-[14px] whitespace-nowrap">10:11:2</div>
    </div>
  );
}

const toolIcons = [
  "M1 1h10v5h4v8H6v-4H1zM6 6v8M10 8v4M8 10h4",
  "M1 1h9v4h5v9H5V9H1zM5 5h5v4H5z",
  "M1 3h14M1 13h14M1 9l4-3l3 3l5-4M13 1l2 2l-2 2M13 11l2 2l-2 2",
  "M4 1v14M1 4h14M7 7l6 6M7 7h5M7 7v5",
  "M1 3h14M1 14l4-2l4-6l3 4l3 1",
  "M4 1v14M1 13l5-5l3-3l3 5l3 1",
  "M1 14l13-12M1 12l5-2l4-3l4 5",
  "M2 8l6-5h6l-5 5v4H2zM2 8h7M10 15v-5M12 15v-5M14 15v-5",
  "M5 1h10v8H5zM1 6h10v8H1zM3 11l2-2l2 2l3-3",
];

const raised = "flex h-[17px] w-[17px] items-center justify-center border border-r-[#606060] border-b-[#606060] border-t-white border-l-white bg-[#f0f0f0]";

function BottomBar() {
  return (
    <footer className="flex h-[19px] shrink-0 bg-[#e8e8e8]">
      <button aria-label="왼쪽으로" className={raised}>
        <svg width="5" height="8" viewBox="0 0 5 8"><path d="M5 0V8L0 4z" /></svg>
      </button>
      <div className="flex h-[17px] min-w-0 flex-1 bg-[#f6f6f6]">
        <div className="ml-[27%] w-[16%] border border-t-white border-r-[#606060] border-b-[#606060] border-l-white bg-[#f0f0f0]" />
      </div>
      <button aria-label="재생" className={raised}><svg width="9" height="9" viewBox="0 0 9 9"><path d="M3 0V9L8 4.500z" /></svg></button>
      <button aria-label="뒤로" className={raised}><svg width="10" height="8" viewBox="0 0 10 8"><path d="M5 0V8L0 4zM10 0V8L5 4z" /></svg></button>
      <button aria-label="정지" className={raised}><svg width="8" height="8" viewBox="0 0 8 8"><path d="M1 1H7V7H1z" /></svg></button>
      <button aria-label="앞으로" className={raised}><svg width="10" height="8" viewBox="0 0 10 8"><path d="M0 0V8L5 4zM5 0V8L10 4z" /></svg></button>
      <div className="relative ml-1 h-[17px] w-[72px]">
        <input
          type="range"
          aria-label="재생 속도"
          defaultValue={15}
          className="absolute inset-0 h-full w-full opacity-0"
        />
        <svg width="72" height="17" viewBox="0 0 72 17">
          <path d="M1 5.500H70" stroke="#909090" strokeWidth="3" />
          <path d="M2 16v-3M12 16v-3M21 16v-3M31 16v-3M40 16v-3M50 16v-3M59 16v-3M69 16v-3" stroke="#000" />
          <path d="M12 2h4v7l-2 2l-2-2z" fill="#f0f0f0" stroke="#606060" />
        </svg>
      </div>
      <div className="flex items-center gap-px pl-[6px] text-[#606060]">
        {toolIcons.map((d, i) => (
          <button key={d} aria-label={`도구 ${i + 1}`} className={`flex h-[17px] w-[16px] items-center ${i === 3 ? "bg-white" : ""}`}>
            <svg width="15" height="15" viewBox="0 0 16 16" fill="none" stroke="currentColor"><path d={d} /></svg>
          </button>
        ))}
        <button aria-label="확대경"><Search size={14} /></button>
        <button aria-label="축소" className="pl-[3px]"><Minus size={14} strokeWidth={3} /></button>
        <button aria-label="확대" className="pl-[3px]"><Plus size={14} strokeWidth={3} /></button>
        <button className="px-[2px] text-[15px] leading-4 font-bold">A</button>
      </div>
    </footer>
  );
}

export default function App() {
  return (
    <div className={`flex h-screen w-full flex-col bg-black pt-px pr-[3px] pb-[3px] pl-[1px] text-black ${uiFont}`}>
      <TitleBar />
      <div className="ml-[2px] flex min-h-0 flex-1 flex-col bg-[#d0d0d0] pr-1 pl-[3px]">
        <div className="flex h-[51px] shrink-0 flex-col gap-[3px] pt-[5px]">
          <Toolbar />
          <Quote />
        </div>
        <main className="flex min-h-0 flex-1 flex-col border border-[#909090]">
          <div className="flex min-h-0 flex-1">
            <LeftAxis />
            <div className="flex min-w-0 flex-1 flex-col">
              <div className="min-h-0 flex-[800]">
                <PricePanel />
              </div>
              <div className="min-h-0 flex-[160] border-t border-[#909090]">
                <IndicatorPanel />
              </div>
            </div>
            <RightAxis />
          </div>
          <TimeAxis />
        </main>
        <BottomBar />
      </div>
    </div>
  );
}
